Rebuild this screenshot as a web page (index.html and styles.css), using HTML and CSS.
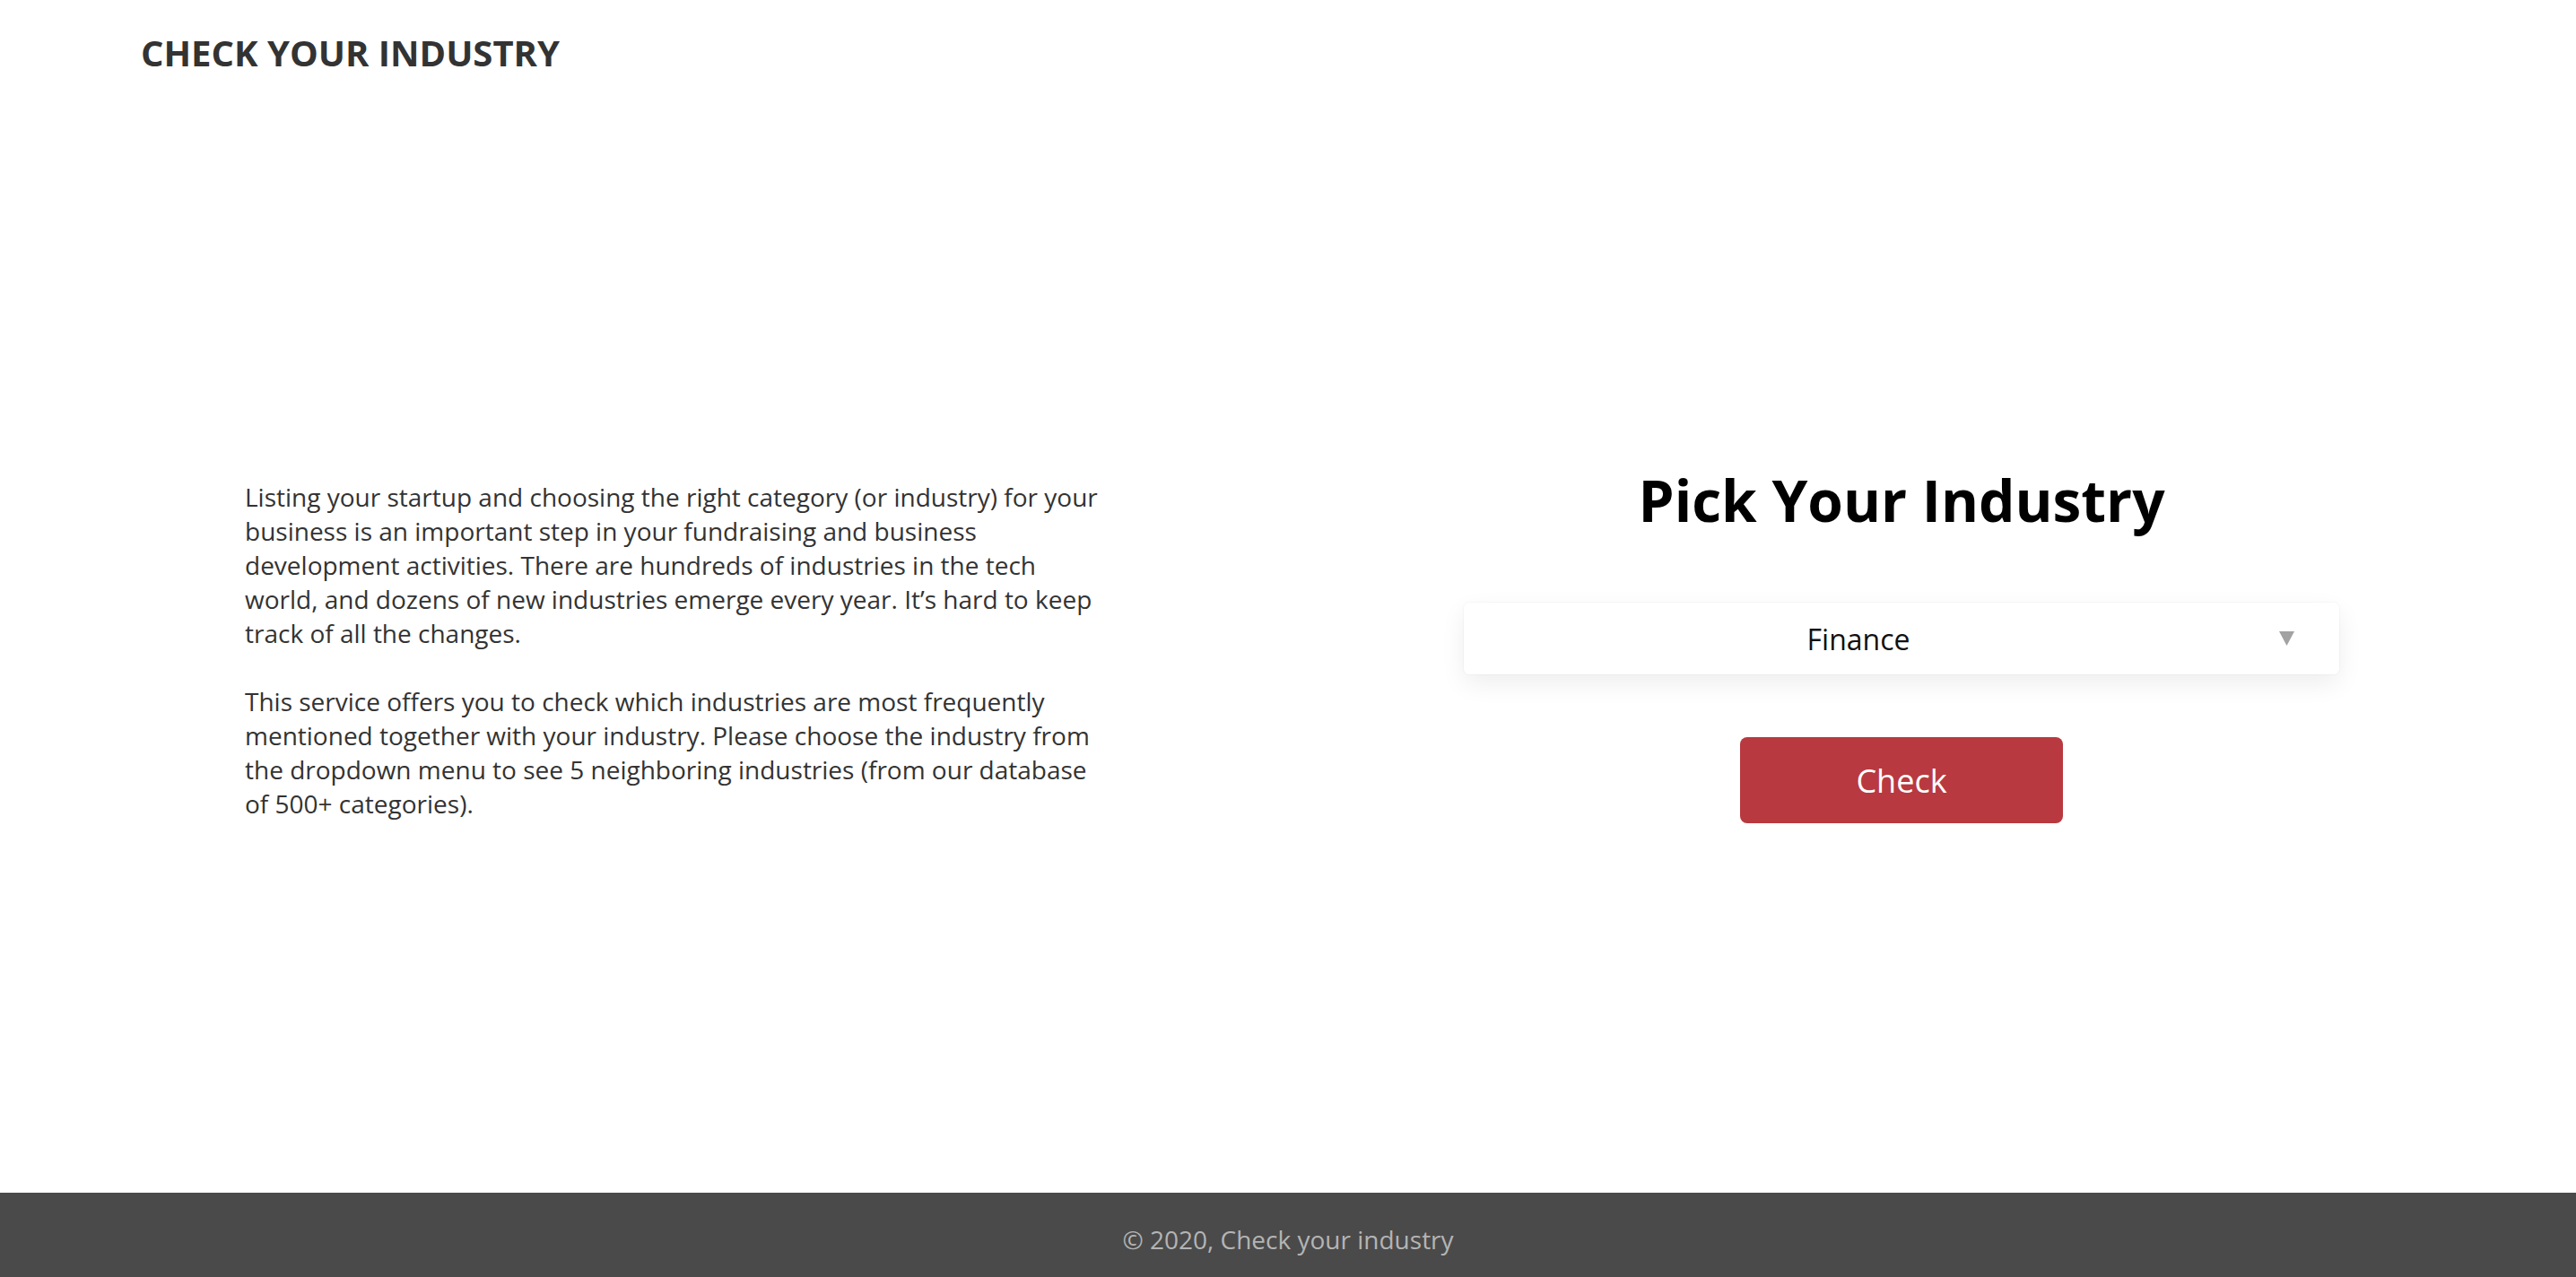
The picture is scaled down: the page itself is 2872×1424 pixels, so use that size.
FILE: index.html
```html
<!DOCTYPE html>
<html lang="en">
<head>
<meta charset="utf-8">
<title>Check Your Industry</title>
<link rel="stylesheet" href="styles.css">
</head>
<body>
<header class="site-header">
  <h1 class="logo">CHECK YOUR INDUSTRY</h1>
</header>
<main class="main">
  <section class="intro">
    <p>Listing your startup and choosing the right category (or industry) for your business is an important step in your fundraising and business development activities. There are hundreds of industries in the tech world, and dozens of new industries emerge every year. It’s hard to keep track of all the changes.</p>
    <p>This service offers you to check which industries are most frequently mentioned together with your industry. Please choose the industry from the dropdown menu to see 5 neighboring industries (from our database of 500+ categories).</p>
  </section>
  <section class="picker">
    <h2 class="picker-title">Pick Your Industry</h2>
    <div class="select" role="combobox" aria-expanded="false">
      <span class="select-value">Finance</span>
      <svg class="select-arrow" width="17" height="16" viewBox="0 0 17 16" aria-hidden="true"><polygon points="0,0 17,0 8.5,16" fill="#a2a2a2"/></svg>
    </div>
    <button class="check-btn" type="button">Check</button>
  </section>
</main>
<footer class="site-footer">© 2020, Check your industry</footer>
</body>
</html>
```
FILE: styles.css
```css
html, body {
  margin: 0;
  padding: 0;
}
body {
  min-height: 100vh;
  display: flex;
  flex-direction: column;
  font-family: "Open Sans", "Noto Sans", "Liberation Sans", sans-serif;
  background: #ffffff;
  color: #333333;
}
.site-header {
  padding: 32px 0 0 157px;
}
.logo {
  margin: 0;
  font-size: 40px;
  line-height: 54px;
  font-weight: 700;
  color: #333333;
  letter-spacing: 0;
}
.main {
  flex: 1;
  display: flex;
  align-items: flex-start;
  padding-top: 428px;
}
.intro {
  width: 1368px;
  box-sizing: border-box;
  padding: 21px 0 0 273px;
}
.intro p {
  margin: 0 0 38px;
  max-width: 962px;
  font-size: 28px;
  line-height: 38px;
  color: #333333;
}
.intro p:last-child {
  margin-bottom: 0;
}
.picker {
  flex: 1;
  display: flex;
  flex-direction: column;
  align-items: center;
}
.picker-title {
  margin: 0;
  font-size: 64px;
  line-height: 87px;
  font-weight: 700;
  color: #000000;
}
.select {
  margin-top: 71px;
  width: 976px;
  height: 80px;
  display: flex;
  align-items: center;
  background: #ffffff;
  border-radius: 6px;
  box-shadow: 0 0 0 1px rgba(0, 0, 0, 0.025), 0 10px 28px rgba(0, 0, 0, 0.07);
}
.select-value {
  flex: 1;
  text-align: center;
  font-size: 32px;
  color: #111111;
}
.select-arrow {
  margin: 0 50px 0 29px;
  display: block;
}
.check-btn {
  margin-top: 70px;
  width: 360px;
  height: 96px;
  border: none;
  border-radius: 8px;
  background: #b8393f;
  color: #ffffff;
  font-family: inherit;
  font-size: 36px;
  padding: 0;
  cursor: pointer;
}
.site-footer {
  margin-top: auto;
  height: 94px;
  box-sizing: border-box;
  padding-top: 33px;
  background: #4a4a4a;
  color: #b4b4b4;
  text-align: center;
  font-size: 28px;
  line-height: 38px;
}
```
